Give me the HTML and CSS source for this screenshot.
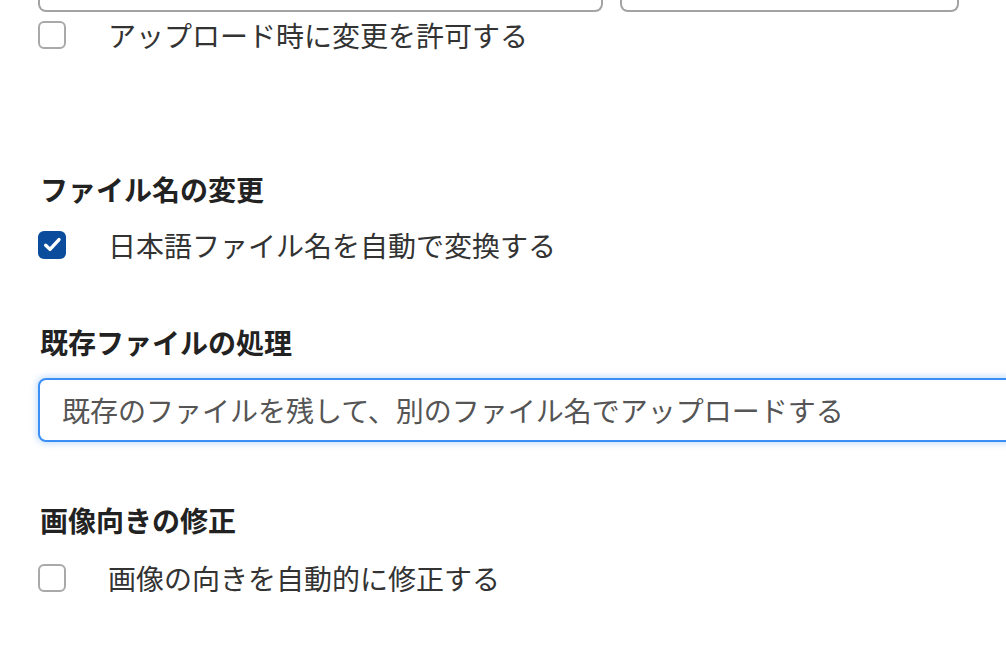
FILE: index.html
```html
<!DOCTYPE html>
<html lang="ja">
<head>
<meta charset="utf-8">
<title>設定</title>
<link rel="stylesheet" href="styles.css">
</head>
<body>
<div class="page">
  <div class="top-row">
    <div class="field-stub field-stub-wide"></div>
    <div class="field-stub field-stub-narrow"></div>
  </div>
  <label class="check check-first">
    <span class="box"></span>
    <span class="check-text">アップロード時に変更を許可する</span>
  </label>

  <h2 class="heading heading-rename">ファイル名の変更</h2>
  <label class="check check-after-heading">
    <span class="box box-checked">
      <svg class="tick" viewBox="0 0 28 28" width="28" height="28"><path d="M7.7 14.2 L12 18.4 L21 8.6" fill="none" stroke="#fff" stroke-width="3.4" stroke-linecap="round" stroke-linejoin="round"/></svg>
    </span>
    <span class="check-text">日本語ファイル名を自動で変換する</span>
  </label>

  <h2 class="heading heading-existing">既存ファイルの処理</h2>
  <div class="select-field">既存のファイルを残して、別のファイル名でアップロードする</div>

  <h2 class="heading heading-orient">画像向きの修正</h2>
  <label class="check check-after-heading check-last">
    <span class="box"></span>
    <span class="check-text">画像の向きを自動的に修正する</span>
  </label>
</div>
</body>
</html>
```

FILE: styles.css
```css
html, body {
  margin: 0;
  padding: 0;
  background: #ffffff;
  overflow: hidden;
}

body {
  font-family: "Noto Sans CJK JP", "Noto Sans", sans-serif;
  color: #333333;
}

.page {
  padding-left: 38px;
  display: flex;
  flex-direction: column;
  align-items: flex-start;
}

.top-row {
  display: flex;
  gap: 17px;
  height: 12px;
}

.field-stub {
  box-sizing: border-box;
  height: 12px;
  border: 2px solid #a3a3a3;
  border-top: none;
  border-radius: 0 0 8px 8px;
  background: #fff;
}

.field-stub-wide {
  width: 565px;
}

.field-stub-narrow {
  width: 339px;
}

.check {
  display: flex;
  align-items: center;
  gap: 42px;
  height: 28px;
}

.check-first {
  margin-top: 9px;
}

.check-after-heading {
  margin-top: 20px;
}

.check-last {
  margin-top: 22px;
}

.box {
  box-sizing: border-box;
  width: 28px;
  height: 28px;
  border: 2px solid #a9a9a9;
  border-radius: 6px;
  background: #fff;
  flex: none;
  display: flex;
}

.box-checked {
  border: none;
  background: #0c4c9c;
}

.tick {
  display: block;
}

.check-text {
  font-size: 28px;
  line-height: 28px;
  color: #333333;
}

.heading {
  margin: 0;
  font-size: 28px;
  line-height: 36px;
  padding-bottom: 4px;
  font-weight: 700;
  color: #222222;
  padding-left: 2px;
}

.heading-rename {
  margin-top: 122px;
}

.heading-existing {
  margin-top: 65px;
}

.heading-orient {
  margin-top: 60px;
}

.select-field {
  box-sizing: border-box;
  margin-top: 14px;
  width: 1000px;
  height: 64px;
  border: 2px solid #3a8ef4;
  border-radius: 8px;
  box-shadow: 0 0 6px 2px rgba(58, 142, 244, 0.28);
  padding-left: 22px;
  display: flex;
  align-items: center;
  font-size: 28px;
  color: #555555;
  background: #fff;
}
```
